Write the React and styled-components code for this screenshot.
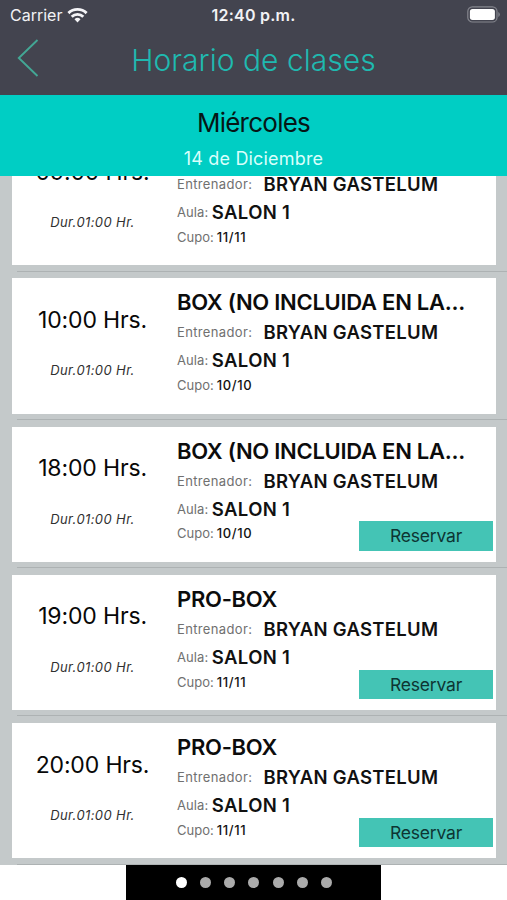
import React from "react";
import styled, { createGlobalStyle } from "styled-components";

const GlobalStyle = createGlobalStyle`
  *, *::before, *::after { box-sizing: border-box; }
  body {
    margin: 0;
    background: #fff;
    font-family: Inter, "Liberation Sans", sans-serif;
  }
`;

const Screen = styled.main`
  display: flex;
  flex-direction: column;
  width: 507px;
  height: 900px;
  overflow: hidden;
  background: #fff;
`;

const Header = styled.header`
  height: 95.3px;
  flex: none;
  background: #43444f;
`;

const StatusBar = styled.div`
  display: grid;
  grid-template-columns: 1fr auto 1fr;
  align-items: center;
  height: 30px;
  padding: 0 7px 0 10px;
  color: #f2f2f5;
`;

const Carrier = styled.div`
  display: flex;
  align-items: center;
  gap: 5px;
  font-size: 16px;
  letter-spacing: 0;
  line-height: 30px;
`;

const Clock = styled.div`
  margin-right: 3px;
  font-size: 16px;
  font-weight: 600;
  letter-spacing: 0.25px;
  line-height: 30px;
`;

const BatteryIcon = styled.svg`
  justify-self: end;
  margin-top: -2px;
`;

const NavBar = styled.div`
  display: grid;
  grid-template-columns: 60px 1fr 60px;
  align-items: center;
  height: 60px;
`;

const BackButton = styled.button`
  display: flex;
  padding: 0 0 4px 16px;
  border: 0;
  background: none;
`;

const NavTitle = styled.h1`
  margin: 0;
  text-align: center;
  font-size: 30px;
  font-weight: 300;
  letter-spacing: 0.03px;
  line-height: 60px;
  color: #1fb9b0;
  white-space: nowrap;
`;

const DayBanner = styled.section`
  display: flex;
  flex-direction: column;
  align-items: center;
  gap: 7px;
  flex: none;
  height: 80.7px;
  padding-top: 11px;
  background: #00cec4;
`;

const DayName = styled.div`
  font-size: 26px;
  line-height: 34px;
  letter-spacing: -0.75px;
  color: #061616;
`;

const DayDate = styled.div`
  font-size: 18px;
  line-height: 24px;
  letter-spacing: 0.18px;
  color: #d9fffb;
`;

const ClassList = styled.ul`
  display: flex;
  flex-direction: column;
  justify-content: flex-end;
  flex: none;
  height: 689px;
  margin: 0;
  padding: 0;
  overflow: hidden;
  list-style: none;
  background: #c4c9ca;
`;

const ClassRow = styled.li`
  flex: none;
  height: 148.25px;
  padding: 6.4px 11px 0 12px;
  background: linear-gradient(#adb2b3, #adb2b3) 17px 147px / 490px 1px no-repeat;
`;

const Card = styled.article`
  display: grid;
  grid-template-columns: 165px 1fr;
  height: 135.3px;
  background: #fff;
`;

const TimeColumn = styled.div`
  display: flex;
  flex-direction: column;
  align-items: center;
  padding: 25.4px 4px 0 0;
`;

const StartTime = styled.time`
  font-size: 23px;
  line-height: 32px;
  letter-spacing: -0.15px;
  color: #080808;
`;

const Duration = styled.span`
  margin-top: 23.6px;
  font-size: 13px;
  font-style: italic;
  letter-spacing: 0.4px;
  line-height: 22px;
  color: #303030;
`;

const Details = styled.div`
  display: grid;
  grid-template-rows: 32px 29px 25.7px 29.3px;
  align-content: start;
  min-width: 0;
  padding: 8px 2.7px 0 0;
`;

const ClassName = styled.h2`
  margin: 0;
  font-size: 22px;
  font-weight: 600;
  letter-spacing: -0.27px;
  line-height: 32px;
  white-space: nowrap;
  color: #0c0c0c;
`;

const Field = styled.div`
  display: flex;
  align-items: center;
  gap: ${(p) => p.$gap}px;
  padding-top: ${(p) => p.$top || 0}px;
  line-height: ${(p) => p.$line}px;
  white-space: nowrap;
`;

const Label = styled.span`
  font-size: 13px;
  letter-spacing: ${(p) => p.$spacing || 0}px;
  color: #707070;
`;

const Value = styled.strong`
  font-size: ${(p) => (p.$small ? 13 : 18.5)}px;
  font-weight: ${(p) => (p.$small ? 500 : 600)};
  letter-spacing: ${(p) => p.$spacing || 0}px;
  color: #111;
`;

const BottomLine = styled.div`
  display: flex;
  justify-content: space-between;
  align-items: flex-start;
`;

const ReserveButton = styled.button`
  width: 134.6px;
  height: 29.3px;
  padding: 0;
  border: 0;
  background: #44c4b5;
  font: 400 17.5px/30px Inter, sans-serif;
  letter-spacing: -0.2px;
  color: #0d3533;
`;

const Footer = styled.footer`
  display: flex;
  justify-content: center;
  flex: 1;
`;

const Pager = styled.div`
  display: flex;
  justify-content: center;
  align-items: center;
  gap: 13.3px;
  width: 254.3px;
  padding-left: 1px;
  background: #000;
`;

const Dot = styled.span`
  width: 11px;
  height: 11px;
  border-radius: 50%;
  background: ${(p) => (p.$active ? "#fff" : "#ababab")};
`;

const classes = [
  { time: "09:00 Hrs.", name: "", quota: "11/11" },
  { time: "10:00 Hrs.", name: "BOX (NO INCLUIDA EN LA...", quota: "10/10" },
  { time: "18:00 Hrs.", name: "BOX (NO INCLUIDA EN LA...", quota: "10/10", open: true },
  { time: "19:00 Hrs.", name: "PRO-BOX", quota: "11/11", open: true },
  { time: "20:00 Hrs.", name: "PRO-BOX", quota: "11/11", open: true },
];

function ClassItem({ item }) {
  return (
    <ClassRow>
      <Card>
        <TimeColumn>
          <StartTime>{item.time}</StartTime>
          <Duration>Dur.01:00 Hr.</Duration>
        </TimeColumn>
        <Details>
          <ClassName>{item.name}</ClassName>
          <Field $gap={11.2} $line={29}>
            <Label $spacing={0.35}>Entrenador:</Label>
            <Value $spacing={0.28}>BRYAN GASTELUM</Value>
          </Field>
          <Field $gap={3.5} $line={25.7} $top={2}>
            <Label $spacing={0.1}>Aula:</Label>
            <Value $spacing={0.35}>SALON 1</Value>
          </Field>
          <BottomLine>
            <Field $gap={3} $line={24.6}>
              <Label>Cupo:</Label>
              <Value $small $spacing={0.65}>{item.quota}</Value>
            </Field>
            {item.open && <ReserveButton type="button">Reservar</ReserveButton>}
          </BottomLine>
        </Details>
      </Card>
    </ClassRow>
  );
}

export default function App() {
  return (
    <Screen>
      <GlobalStyle />
      <Header>
        <StatusBar>
          <Carrier>
            Carrier
            <svg width="21" height="16" viewBox="0 0 21 16" fill="none" stroke="#f5f5f8" strokeWidth="2.9">
              <path d="M1.4 6.1a13 13 0 0 1 18.2 0" />
              <path d="M4.7 9.7a8.4 8.4 0 0 1 11.6 0" />
              <path d="M10.5 15.4l-3-3.1a4.3 4.3 0 0 1 6 0z" fill="#f5f5f8" stroke="none" />
            </svg>
          </Carrier>
          <Clock>12:40 p.m.</Clock>
          <BatteryIcon width="33" height="17" viewBox="0 0 33 17" fill="none">
            <rect x="0.8" y="0.8" width="29.2" height="15.2" rx="4.6" stroke="#85868e" strokeWidth="1.2" />
            <rect x="2.9" y="2.9" width="25" height="11" rx="2.6" fill="#fff" />
            <path d="M31.3 6v5q1.5-.7 1.5-2.5t-1.5-2.5z" fill="#85868e" />
          </BatteryIcon>
        </StatusBar>
        <NavBar>
          <BackButton type="button" aria-label="Atrás">
            <svg width="24" height="38" viewBox="0 0 24 38" fill="none" stroke="#43a795" strokeWidth="1.9">
              <path d="M21.5 1L2.8 19l18.7 18" />
            </svg>
          </BackButton>
          <NavTitle>Horario de clases</NavTitle>
        </NavBar>
      </Header>
      <DayBanner>
        <DayName>Miércoles</DayName>
        <DayDate>14 de Diciembre</DayDate>
      </DayBanner>
      <ClassList>
        {classes.map((item) => (
          <ClassItem key={item.time} item={item} />
        ))}
      </ClassList>
      <Footer>
        <Pager>
          {Array.from({ length: 7 }, (_, i) => (
            <Dot key={i} $active={i === 0} />
          ))}
        </Pager>
      </Footer>
    </Screen>
  );
}
